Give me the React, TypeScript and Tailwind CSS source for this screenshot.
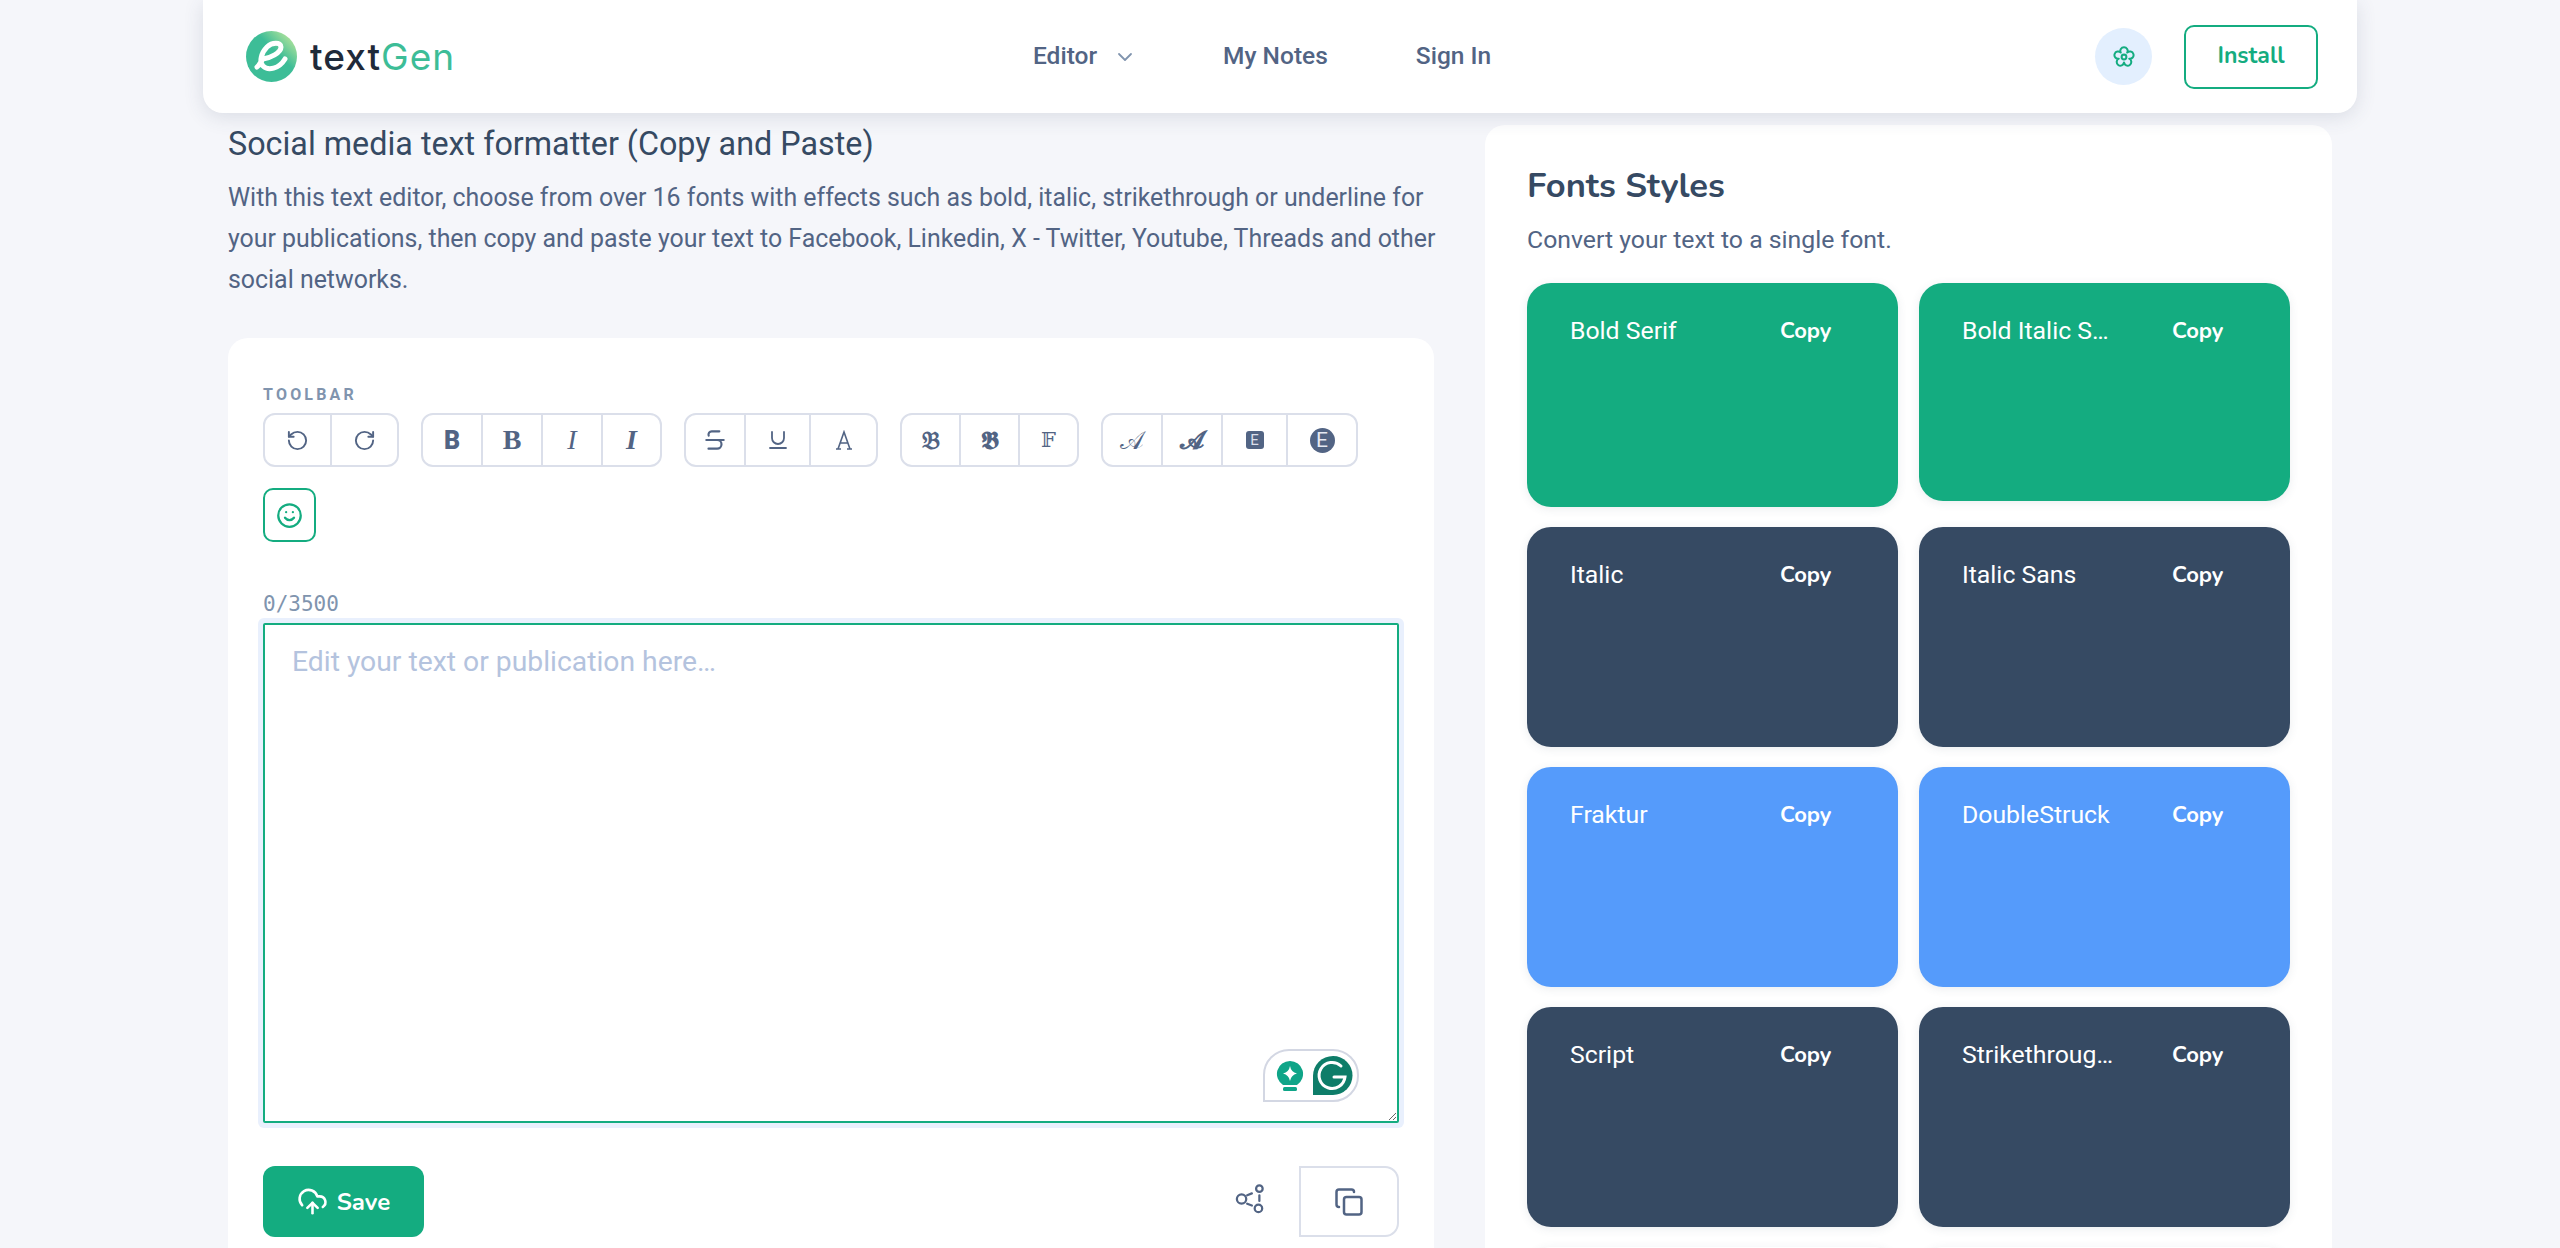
import React from 'react';
import { ChevronDown, RotateCcw, RotateCw, Strikethrough, Underline, Smile, CloudUpload, Copy } from 'lucide-react';

const heading = "font-['Nunito','Lato','Noto_Sans',sans-serif]";

// logo mark
const Logo = () => (
  <div className="flex items-center gap-[13px]">
    <svg className="shrink-0" width="51" height="51" viewBox="0 0 51 51">
      <defs>
        <linearGradient id="logoGrad" x1="0.2" y1="0.8" x2="0.9" y2="0.1">
          <stop offset="0.55" stopColor="#3dbd97" />
          <stop offset="1" stopColor="#b3e49b" />
        </linearGradient>
      </defs>
      <circle cx="25.5" cy="25.5" r="25.5" fill="url(#logoGrad)" />
      <path
        d="M11 36 C14 34 14 31 17 28 C24 27 35 22 35 16 C35 11 26 11 21 16 C15 22 13 31 17 35 C22 40 33 38 39 28"
        fill="none"
        stroke="#fff"
        strokeWidth="5"
        strokeLinecap="round"
      />
    </svg>
    <span className="whitespace-nowrap font-['Inter',sans-serif] text-[37px] font-medium leading-none tracking-[1px] text-[#1f2a3a]">
      text<span className="font-normal text-[#3dbd97]">Gen</span>
    </span>
  </div>
);

const Header = () => (
  <header className="mx-[203px] flex h-[113px] shrink-0 items-center rounded-b-[20px] bg-white pl-[43px] pr-[39px] shadow-[0_4px_20px_rgba(54,74,99,0.14)] relative z-10">
    <div className="w-[207px] shrink-0">
      <Logo />
    </div>
    <nav className="ml-[580px] flex items-center font-['Roboto',sans-serif] text-[24.5px] font-medium text-[#526484]">
      <span>Editor</span>
      <ChevronDown className="ml-[16px] h-[24px] w-[24px] text-[#8094ae]" strokeWidth={1.8} />
      <span className="ml-[86px]">My Notes</span>
      <span className="ml-[88px]">Sign In</span>
    </nav>
    <div className="ml-auto flex items-center gap-[32px]">
      <div className="flex h-[57px] w-[57px] items-center justify-center rounded-full bg-[#e3effe]">
        <svg width="22" height="22" viewBox="0 0 24 24" fill="none" stroke="#14ac80" strokeWidth="2.2">
          <path d="M8.47 7.15A4 4 0 1 1 15.53 7.15A4 4 0 1 1 17.71 13.85A4 4 0 1 1 12 18A4 4 0 1 1 6.29 13.85A4 4 0 1 1 8.47 7.15z" strokeLinejoin="round" />
          <circle cx="12" cy="12" r="2.6" />
        </svg>
      </div>
      <button className={`h-[64px] w-[134px] rounded-[10px] border-2 border-[#14ac80] bg-white text-[23px] font-bold text-[#14ac80] ${heading}`}>
        Install
      </button>
    </div>
  </header>
);

const cell = 'flex h-full items-center justify-center border-r-2 border-[#dbdfea] text-[#526484] last:border-r-0';

const Group = ({ items }: { items: [number, React.ReactNode][] }) => (
  <div className="flex h-[54px] rounded-[12px] border-2 border-[#dbdfea]">
    {items.map(([w, node], i) => (
      <div key={i} className={cell} style={{ width: w }}>
        {node}
      </div>
    ))}
  </div>
);

const serif = "font-['Liberation_Serif',serif] text-[28px] leading-none";
const math = "font-['DejaVu_Serif','DejaVu_Sans',serif] text-[25px] leading-none";

const Toolbar = () => (
  <div className="flex flex-wrap gap-x-[22px] gap-y-[21px]">
    <Group
      items={[
        [67, <RotateCcw key="u" className="h-[23px] w-[23px]" strokeWidth={2} />],
        [65, <RotateCw key="r" className="h-[23px] w-[23px]" strokeWidth={2} />],
      ]}
    />
    <Group
      items={[
        [60, <span key="b" className="font-['Roboto',sans-serif] text-[25px] font-black leading-none">B</span>],
        [60, <span key="bs" className={`${serif} font-bold`}>B</span>],
        [60, <span key="i" className={`${serif} italic`}>I</span>],
        [57, <span key="bi" className={`${serif} font-bold italic`}>I</span>],
      ]}
    />
    <Group
      items={[
        [60, <Strikethrough key="s" className="h-[26px] w-[26px]" strokeWidth={2} />],
        [65, <Underline key="un" className="h-[24px] w-[24px]" strokeWidth={1.8} />],
        [65, (
          <svg key="a" width="20" height="20" viewBox="0 0 20 20" fill="none" stroke="currentColor" strokeWidth="1.6">
            <path d="M2 19h5M13 19h5M4 19L10 2l6 17M6 13h8" />
          </svg>
        )],
      ]}
    />
    <Group
      items={[
        [59, <span key="f1" className={`${math} font-bold`}>𝔅</span>],
        [59, <span key="f2" className={`${math} font-bold`}>𝕭</span>],
        [57, <span key="f3" className="font-['DejaVu_Serif','DejaVu_Sans',serif] text-[21px] leading-none">𝔽</span>],
      ]}
    />
    <Group
      items={[
        [60, <span key="c1" className={math}>𝒜</span>],
        [60, <span key="c2" className={`${math} font-bold`}>𝓐</span>],
        [65, (
          <span key="e1" className="flex h-[18px] w-[18px] items-center justify-center rounded-[3px] bg-[#526484] font-['Roboto',sans-serif] text-[15px] leading-none text-[#dbdfea]">
            E
          </span>
        )],
        [68, (
          <span key="e2" className="flex h-[25px] w-[25px] items-center justify-center rounded-full bg-[#526484] font-['Roboto',sans-serif] text-[21px] leading-none text-[#e5e9f2]">
            E
          </span>
        )],
      ]}
    />
    <button className="flex h-[54px] w-[53px] items-center justify-center rounded-[10px] border-2 border-[#14ac80] text-[#14ac80]">
      <Smile className="h-[27px] w-[27px]" strokeWidth={2} />
    </button>
  </div>
);

const Grammarly = () => (
  <div className="absolute bottom-[21px] right-[40px] flex h-[53px] w-[96px] items-center gap-[9px] rounded-[26px] rounded-bl-none border-2 border-[#d3d7e3] bg-white pl-[11px]">
    <svg width="28" height="32" viewBox="0 0 28 32">
      <path d="M14 1a13 13 0 0 1 7 24H7A13 13 0 0 1 14 1z" fill="#0fa588" />
      <path d="M14 6q1 6 7 7.500q-6 1.500-7 7.500q-1-6-7-7.500q6-1.500 7-7.500z" fill="#fff" />
      <rect x="7" y="27" width="14" height="4" rx="1.5" fill="#0fa588" />
    </svg>
    <svg width="40" height="39" viewBox="0 0 40 39">
      <path d="M20 0a19.5 19.5 0 0 1 0 39H0V20A20 20 0 0 1 20 0z" fill="#0e7d69" />
      <path d="M28 10a13 13 0 1 0 4 11H21" fill="none" stroke="#fff" strokeWidth="3" strokeLinecap="round" />
    </svg>
  </div>
);

const Editor = () => (
  <section className="rounded-[20px] bg-white px-[35px] pb-[40px] pt-[47px]">
    <div className="mb-[8px] font-['Roboto',sans-serif] text-[16px] font-bold leading-[20px] tracking-[0.2em] text-[#8094ae]">
      TOOLBAR
    </div>
    <Toolbar />
    <div className="mt-[50px] font-['DejaVu_Sans_Mono',monospace] text-[21px] leading-[24px] text-[#8094ae]">0/3500</div>
    <div className="relative mt-[7px]">
      <textarea
        placeholder="Edit your text or publication here…"
        className="block h-[500px] w-full resize-y rounded-[2px] border-2 border-[#14ac80] px-[27px] py-[19px] font-['Roboto',sans-serif] text-[28.3px] leading-[36px] text-[#526484] shadow-[0_0_0_5px_#e9f0fd] outline-none placeholder:text-[#b4c3de]"
      />
      <Grammarly />
    </div>
    <div className="mt-[43px] flex items-center">
      <button className={`flex h-[71px] w-[161px] items-center justify-center gap-[9px] rounded-[12px] bg-[#14ac80] text-[24px] font-bold text-white ${heading}`}>
        <CloudUpload className="h-[31px] w-[31px]" strokeWidth={2} />
        Save
      </button>
      <svg className="mb-[5px] ml-auto" width="30" height="30" viewBox="0 0 32 32" fill="none" stroke="#526484" strokeWidth="2.4" strokeLinecap="round">
        <circle cx="7" cy="16" r="5" />
        <circle cx="26" cy="5" r="3.5" />
        <circle cx="25" cy="26" r="4" />
        <path d="M13 12l5-2M13 21l5 2M26 12v6" />
      </svg>
      <button className="ml-[34px] flex h-[71px] w-[100px] items-center justify-center rounded-r-[14px] border-2 border-[#dbdfea] text-[#526484]">
        <Copy className="h-[30px] w-[30px]" strokeWidth={2} />
      </button>
    </div>
  </section>
);

const fonts = [
  { name: 'Bold Serif', bg: 'bg-[#14ac80]', h: 'h-[224px]' },
  { name: 'Bold Italic S…', bg: 'bg-[#14ac80]', h: 'h-[218px]' },
  { name: 'Italic', bg: 'bg-[#364a63]', h: 'h-[220px]' },
  { name: 'Italic Sans', bg: 'bg-[#364a63]', h: 'h-[220px]' },
  { name: 'Fraktur', bg: 'bg-[#559bfb]', h: 'h-[220px]' },
  { name: 'DoubleStruck', bg: 'bg-[#559bfb]', h: 'h-[220px]' },
  { name: 'Script', bg: 'bg-[#364a63]', h: 'h-[220px]' },
  { name: 'Strikethroug…', bg: 'bg-[#364a63]', h: 'h-[220px]' },
];

const FontCard = ({ name, bg, h }: { name: string; bg: string; h: string }) => (
  <div className={`${bg} ${h} flex items-start rounded-[24px] pl-[43px] pt-[32px] text-white shadow-[0_2px_10px_rgba(54,74,99,0.1)]`}>
    <span className="w-[150px] whitespace-nowrap font-['Roboto',sans-serif] text-[24.8px] leading-[32px]">{name}</span>
    <span className={`ml-[60px] text-[22px] font-bold leading-[32px] ${heading}`}>Copy</span>
  </div>
);

const FontsPanel = () => (
  <aside className="-mt-[1px] rounded-t-[20px] bg-white px-[42px] pb-[40px] pt-[39px]">
    <h2 className={`text-[34.5px] font-bold leading-[44px] text-[#364a63] ${heading}`}>Fonts Styles</h2>
    <p className="mt-[16px] font-['Roboto',sans-serif] text-[24.8px] leading-[32px] text-[#526484]">Convert your text to a single font.</p>
    <div className="mt-[27px] grid grid-cols-2 items-start gap-x-[21px] gap-y-[20px]">
      {fonts.map((f) => (
        <FontCard key={f.name} {...f} />
      ))}
      <div className="h-[220px] rounded-[24px] bg-white shadow-[0_2px_10px_rgba(54,74,99,0.1)]" />
      <div className="h-[220px] rounded-[24px] bg-white shadow-[0_2px_10px_rgba(54,74,99,0.1)]" />
    </div>
  </aside>
);

const App: React.FC = () => (
  <div className="flex h-screen flex-col overflow-hidden bg-[#f5f6fa]">
    <Header />
    <main className="mx-[228px] mt-[13px] grid grid-cols-[1206px_847px] gap-x-[51px]">
      <div>
        <h1 className="font-['Roboto',sans-serif] text-[32.3px] leading-[36px] text-[#364a63]">Social media text formatter (Copy and Paste)</h1>
        <p className="-mr-[8px] mt-[15px] font-['Roboto',sans-serif] text-[24.9px] leading-[41px] text-[#526484]">
          With this text editor, choose from over 16 fonts with effects such as bold, italic, strikethrough or underline for your publications, then copy and paste your text to Facebook, Linkedin, X - Twitter, Youtube, Threads and other social networks.
        </p>
        <div className="mt-[38px]">
          <Editor />
        </div>
      </div>
      <FontsPanel />
    </main>
  </div>
);

export default App;
